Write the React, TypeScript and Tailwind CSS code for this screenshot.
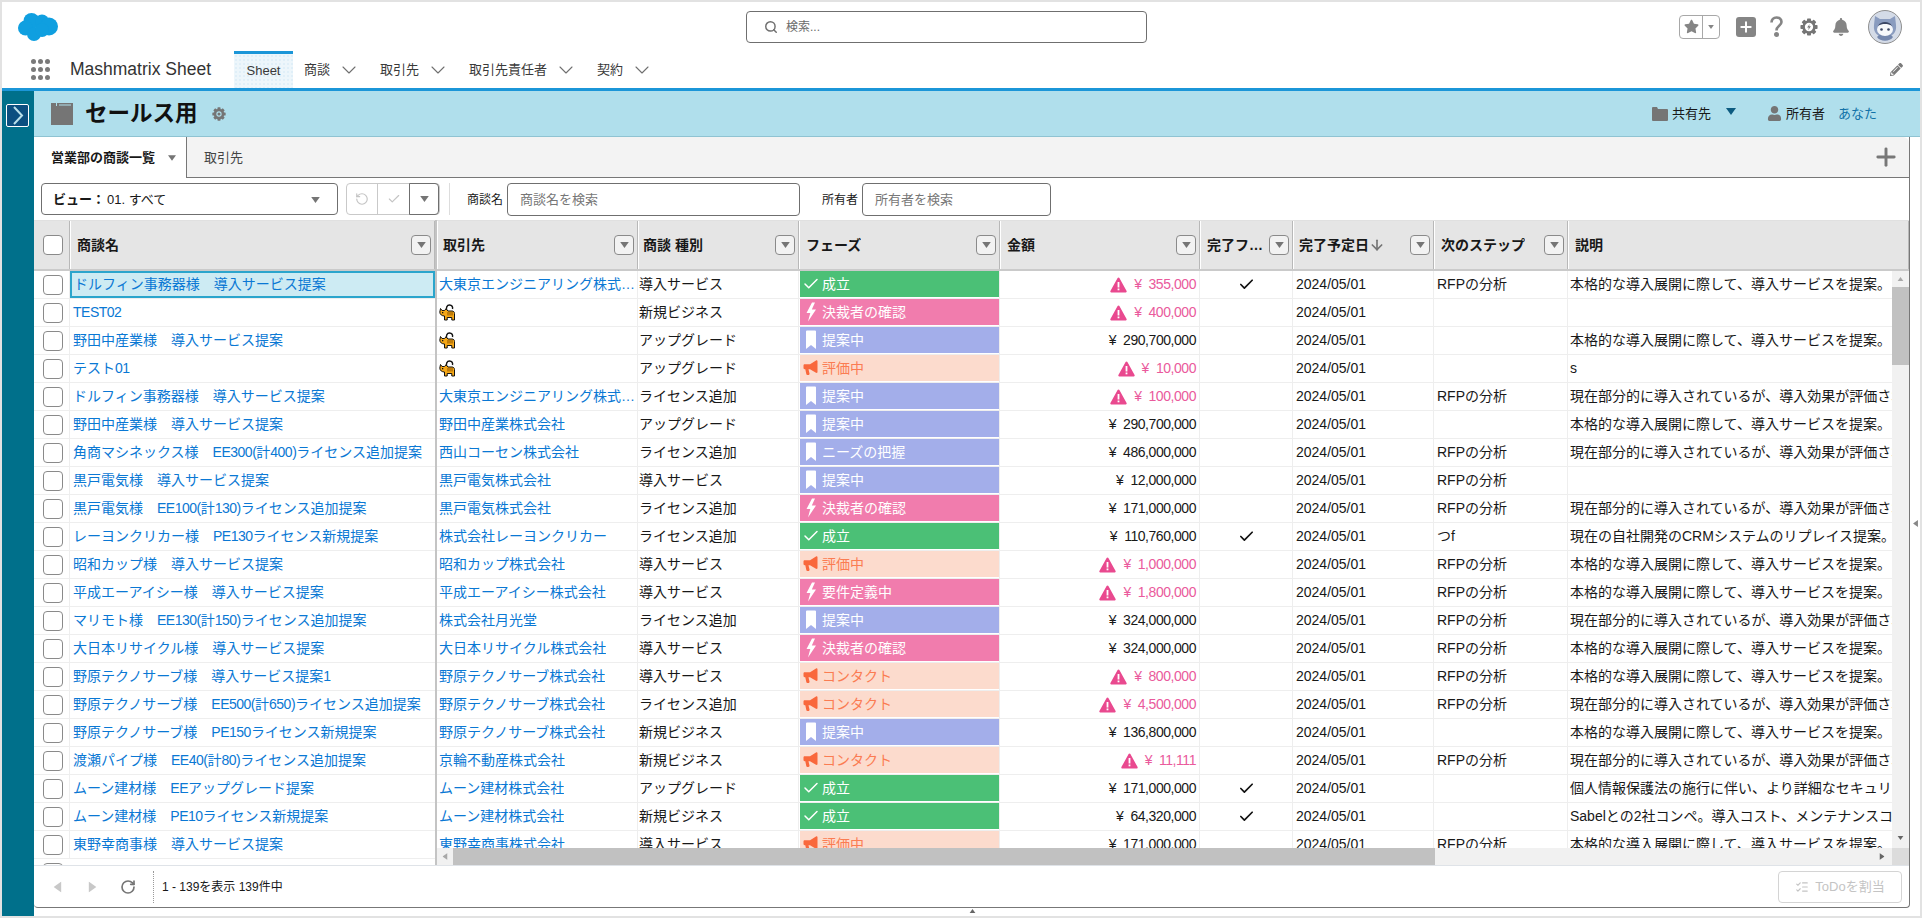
import { ArrowDown, Check, ChevronDown, ListChecks, Plus, RotateCcw, RotateCw, Search } from "lucide-react";
import { FaBell, FaPencilAlt, FaStar, FaUser } from "react-icons/fa";

type Phase = "won" | "decide" | "propose" | "eval" | "needs" | "req" | "contact";

const PHASES: Record<Phase, { label: string; kind: "green" | "pink" | "blue" | "peach" }> = {
  won: { label: "成立", kind: "green" },
  decide: { label: "決裁者の確認", kind: "pink" },
  req: { label: "要件定義中", kind: "pink" },
  propose: { label: "提案中", kind: "blue" },
  needs: { label: "ニーズの把握", kind: "blue" },
  eval: { label: "評価中", kind: "peach" },
  contact: { label: "コンタクト", kind: "peach" },
};

const HONKAKU = "本格的な導入展開に際して、導入サービスを提案。";
const GENZAI = "現在部分的に導入されているが、導入効果が評価されていない。";
const RFP = "RFPの分析";

type Row = {
  name: string;
  account: string | null;
  type: string;
  phase: Phase;
  amount: string;
  warn?: boolean;
  done?: boolean;
  next?: string;
  desc?: string;
};

const ROWS: Row[] = [
  { name: "ドルフィン事務器様　導入サービス提案", account: "大東京エンジニアリング株式会社", type: "導入サービス", phase: "won", amount: "355,000", warn: true, done: true, next: RFP, desc: HONKAKU },
  { name: "TEST02", account: null, type: "新規ビジネス", phase: "decide", amount: "400,000", warn: true },
  { name: "野田中産業様　導入サービス提案", account: null, type: "アップグレード", phase: "propose", amount: "290,700,000", desc: HONKAKU },
  { name: "テスト01", account: null, type: "アップグレード", phase: "eval", amount: "10,000", warn: true, desc: "s" },
  { name: "ドルフィン事務器様　導入サービス提案", account: "大東京エンジニアリング株式会社", type: "ライセンス追加", phase: "propose", amount: "100,000", warn: true, next: RFP, desc: GENZAI },
  { name: "野田中産業様　導入サービス提案", account: "野田中産業株式会社", type: "アップグレード", phase: "propose", amount: "290,700,000", desc: HONKAKU },
  { name: "角商マシネックス様　EE300(計400)ライセンス追加提案", account: "西山コーセン株式会社", type: "ライセンス追加", phase: "needs", amount: "486,000,000", next: RFP, desc: GENZAI },
  { name: "黒戸電気様　導入サービス提案", account: "黒戸電気株式会社", type: "導入サービス", phase: "propose", amount: "12,000,000", next: RFP },
  { name: "黒戸電気様　EE100(計130)ライセンス追加提案", account: "黒戸電気株式会社", type: "ライセンス追加", phase: "decide", amount: "171,000,000", next: RFP, desc: GENZAI },
  { name: "レーヨンクリカー様　PE130ライセンス新規提案", account: "株式会社レーヨンクリカー", type: "ライセンス追加", phase: "won", amount: "110,760,000", done: true, next: "つf", desc: "現在の自社開発のCRMシステムのリプレイス提案。" },
  { name: "昭和カップ様　導入サービス提案", account: "昭和カップ株式会社", type: "導入サービス", phase: "eval", amount: "1,000,000", warn: true, next: RFP, desc: HONKAKU },
  { name: "平成エーアイシー様　導入サービス提案", account: "平成エーアイシー株式会社", type: "導入サービス", phase: "req", amount: "1,800,000", warn: true, next: RFP, desc: HONKAKU },
  { name: "マリモト様　EE130(計150)ライセンス追加提案", account: "株式会社月光堂", type: "ライセンス追加", phase: "propose", amount: "324,000,000", next: RFP, desc: GENZAI },
  { name: "大日本リサイクル様　導入サービス提案", account: "大日本リサイクル株式会社", type: "導入サービス", phase: "decide", amount: "324,000,000", next: RFP, desc: HONKAKU },
  { name: "野原テクノサーブ様　導入サービス提案1", account: "野原テクノサーブ株式会社", type: "導入サービス", phase: "contact", amount: "800,000", warn: true, next: RFP, desc: HONKAKU },
  { name: "野原テクノサーブ様　EE500(計650)ライセンス追加提案", account: "野原テクノサーブ株式会社", type: "ライセンス追加", phase: "contact", amount: "4,500,000", warn: true, next: RFP, desc: GENZAI },
  { name: "野原テクノサーブ様　PE150ライセンス新規提案", account: "野原テクノサーブ株式会社", type: "新規ビジネス", phase: "propose", amount: "136,800,000", desc: HONKAKU },
  { name: "渡瀬パイプ様　EE40(計80)ライセンス追加提案", account: "京輪不動産株式会社", type: "新規ビジネス", phase: "contact", amount: "11,111", warn: true, next: RFP, desc: GENZAI },
  { name: "ムーン建材様　EEアップグレード提案", account: "ムーン建材株式会社", type: "アップグレード", phase: "won", amount: "171,000,000", done: true, desc: "個人情報保護法の施行に伴い、より詳細なセキュリティ対策を提案。" },
  { name: "ムーン建材様　PE10ライセンス新規提案", account: "ムーン建材株式会社", type: "新規ビジネス", phase: "won", amount: "64,320,000", done: true, desc: "Sabelとの2社コンペ。導入コスト、メンテナンスコストを評価。" },
  { name: "東野幸商事様　導入サービス提案", account: "東野幸商事株式会社", type: "導入サービス", phase: "eval", amount: "171,000,000", next: RFP, desc: HONKAKU },
];

function Cloud() {
  return (
    <svg width="40" height="28" viewBox="0 0 40 28" fill="#0f9fe0">
      <circle cx="13.5" cy="8" r="8" />
      <circle cx="24" cy="8.5" r="7" />
      <circle cx="31" cy="13.5" r="9" />
      <circle cx="7.5" cy="15" r="7.5" />
      <circle cx="16" cy="21" r="7" />
      <circle cx="24" cy="17" r="7" />
    </svg>
  );
}

function Gear({ size, bolt }: { size: number; bolt?: boolean }) {
  const teeth = [0, 45, 90, 135];
  return (
    <svg width={size} height={size} viewBox="0 0 20 20">
      <circle cx="10" cy="10" r="7.4" fill="#757575" />
      {teeth.map((t) => (
        <rect key={t} x="7.8" y="0.5" width="4.4" height="19" rx="0.8" fill="#757575" transform={`rotate(${t} 10 10)`} />
      ))}
      <circle cx="10" cy="10" r={bolt ? 4.6 : 3.8} fill={bolt ? "#fff" : "#b0dfec"} />
      {bolt ? <path d="M10.8 6.6 7.9 10.6h1.900l-.7 2.900 3-4.200h-2z" fill="#757575" /> : <circle cx="10" cy="10" r="2.200" fill="#757575" />}
    </svg>
  );
}

function Avatar() {
  return (
    <svg width="34" height="34" viewBox="0 0 34 34">
      <circle cx="17" cy="17" r="16.5" fill="#d4dbe7" stroke="#8f8f8f" />
      <path d="M7 6l5 3h10l5-3 1 9c1 8-4 12-11 12S5 23 6 15z" fill="#8a9cbf" />
      <path d="M9 27c3 5 13 5 16 0l-2-2H11z" fill="#7487ad" />
      <ellipse cx="17" cy="19.500" rx="8" ry="6.500" fill="#f6f8fb" />
      <path d="M10 16c1.500-3 4-4 7-4s5.500 1 7 4c-2-1.500-4.500-2-7-2s-5 .5-7 2z" fill="#3a4664" />
      <circle cx="13.5" cy="19.500" r="1.300" fill="#3a4664" />
      <circle cx="20.500" cy="19.500" r="1.300" fill="#3a4664" />
    </svg>
  );
}

function CatIcon() {
  return (
    <svg width="16" height="17" viewBox="0 0 16 17" className="shrink-0">
      <path d="M8 7C6.500 4 8 1 10.500 1S14 3 13.500 5" fill="none" stroke="#111" strokeWidth="1.400" />
      <path d="M1.500 4.500 3 6.500h2.500L7 4.800 9 7h4c1.500 0 2.500 1 2.500 2.500V16H12.800v-2.500H8.200V16H5.500v-4C3 12 .8 10.500.8 8z" fill="#f5a716" stroke="#111" strokeWidth="1" strokeLinejoin="round" />
      <path d="M9 8v3.500M11 8v3.500M13 8v3.500" stroke="#8a5200" strokeWidth="1" />
      <rect x="3" y="8" width="1.300" height="1.300" fill="#111" />
    </svg>
  );
}

function PhaseIcon({ kind }: { kind: string }) {
  if (kind === "green") return <Check size={18} strokeWidth={2} className="text-white" />;
  if (kind === "pink")
    return (
      <svg width="14" height="20" viewBox="0 0 14 20" fill="#fff">
        <path d="M8 0.500 2.500 11h3.800L4 19.500 12 7.500H7.800L11 0.500z" />
      </svg>
    );
  if (kind === "blue")
    return (
      <svg width="12" height="20" viewBox="0 0 12 20" fill="#fff">
        <path d="M2 0.500h8a1 1 0 0 1 1 1V19l-5-4-5 4V1.500a1 1 0 0 1 1-1z" />
      </svg>
    );
  return (
    <svg width="16" height="20" viewBox="0 0 16 20" fill="#f9683c">
      <path d="M0.500 7.500c0-.7.500-1.200 1.200-1.200H7L13 2.500c.8-.4 1.500 0 1.500.8V14c0 .8-.7 1.200-1.500.8l-6-3.500H5.500l1 4.200c.2.800-.3 1.500-1.200 1.500H4.400c-.6 0-1-.3-1.100-.9l-1-4.800H1.700c-.7 0-1.200-.5-1.200-1.200z" />
    </svg>
  );
}

function WarnIcon() {
  return (
    <svg width="17" height="16" viewBox="0 0 17 16" className="mr-[7px] shrink-0">
      <path d="M8.500 0.500c.4 0 .7.200.9.600l7.200 13c.3.600-.1 1.400-.8 1.400H1.200c-.7 0-1.100-.8-.8-1.400l7.200-13c.2-.4.500-.6.900-.6z" fill="#e9498f" />
      <rect x="7.600" y="5" width="1.800" height="5.500" fill="#fff" />
      <rect x="7.600" y="11.500" width="1.800" height="1.800" fill="#fff" />
    </svg>
  );
}

function Caret({ className }: { className: string }) {
  return (
    <svg width="10" height="7" viewBox="0 0 10 7" className={className}>
      <path d="M0 0h10L5 7z" fill="currentColor" />
    </svg>
  );
}

function FilterBtn() {
  return (
    <button className="ml-auto flex h-[20px] w-[20px] shrink-0 items-center justify-center rounded-[4px] border border-[#8a8a8a] bg-[#f2f2f2] text-[#757575]">
      <Caret className="h-[6px] w-[9px]" />
    </button>
  );
}

function Box() {
  return <span className="block h-[20px] w-[20px] rounded-[4px] border border-[#8a8a8a] bg-white" />;
}

// the latin runs of the names sit tighter than the kana around them
function NameText({ text }: { text: string }) {
  return (
    <>
      {text.split(/([A-Za-z0-9()]+)/).map((part, i) =>
        i % 2 === 1 ? (
          <span key={i} className="tracking-[-0.5px]">
            {part}
          </span>
        ) : (
          part
        ),
      )}
    </>
  );
}

function HeadCell({ label, width, filter = true, arrow, pad }: { label: string; width: string; filter?: boolean; arrow?: boolean; pad: string }) {
  return (
    <div className={`flex h-full shrink-0 items-center border-r border-r-[#b8b8b8] border-l border-l-white pr-[3px] ${width} ${pad}`}>
      <span className="truncate pt-[1px] text-[14px] font-bold text-[#181818]">{label}</span>
      {arrow ? <ArrowDown size={16} strokeWidth={2.5} className="shrink-0 text-[#757575]" /> : null}
      {filter ? <FilterBtn /> : null}
    </div>
  );
}

function Amount({ row }: { row: Row }) {
  const color = row.warn ? "text-[#ea5a9c]" : "text-[#181818]";
  return (
    <div className={`flex h-full w-[200px] shrink-0 items-center justify-end border-r border-[#eeeeee] pr-[3px] tracking-[-0.45px] ${color}`}>
      {row.warn ? <WarnIcon /> : null}
      <span className="mr-[7px]">¥</span>
      <span>{row.amount}</span>
    </div>
  );
}

function PhaseCell({ phase }: { phase: Phase }) {
  const { label, kind } = PHASES[phase];
  const fill = {
    green: "bg-[#4bc076] text-white",
    pink: "bg-[#f17cad] text-white",
    blue: "bg-[#a3aeea] text-white",
    peach: "bg-[#fcdbcd] text-[#fb7c52]",
  }[kind];
  return (
    <div className="h-full w-[201px] shrink-0 border-r border-[#eeeeee] pb-[1px] pl-[1px]">
      <div className={`flex h-full items-center ${fill}`}>
        <div className="flex w-[22px] shrink-0 justify-center">
          <PhaseIcon kind={kind} />
        </div>
        <span>{label}</span>
      </div>
    </div>
  );
}

function RightRow({ row }: { row: Row }) {
  return (
    <div className="flex h-[28px] border-b border-[#eeeeee] text-[14px] text-[#181818]">
      <div className="flex h-full w-[201px] shrink-0 items-center border-r border-[#eeeeee] pl-[2px] pr-[1px] text-[#0a78d4]">
        {row.account ? <span className="truncate">{row.account}</span> : <CatIcon />}
      </div>
      <div className="flex h-full w-[161px] shrink-0 items-center border-r border-[#eeeeee] pl-[1px]">{row.type}</div>
      <PhaseCell phase={row.phase} />
      <Amount row={row} />
      <div className="flex h-full w-[93px] shrink-0 items-center justify-center border-r border-[#eeeeee]">
        {row.done ? <Check size={17} strokeWidth={2.4} className="text-[#111]" /> : null}
      </div>
      <div className="flex h-full w-[141px] shrink-0 items-center border-r border-[#eeeeee] pl-[3px]">2024/05/01</div>
      <div className="flex h-full w-[134px] shrink-0 items-center border-r border-[#eeeeee] pl-[3px]">{row.next}</div>
      <div className="flex h-full w-[324px] shrink-0 items-center overflow-hidden whitespace-nowrap pl-[2px]">{row.desc}</div>
    </div>
  );
}

function Grid() {
  return (
    <div className="flex min-h-0 flex-1">
      {/* frozen columns */}
      <div className="flex w-[403px] shrink-0 flex-col overflow-hidden border-r-2 border-[#c4c4c4]">
        <div className="flex h-[51px] shrink-0 border-t border-[#e0e0e0] border-b-2 border-b-[#cacaca] bg-[#e5e5e5]">
          <div className="flex h-full w-[36px] shrink-0 items-center justify-center border-r border-r-[#b8b8b8] pl-[2px]">
            <Box />
          </div>
          <HeadCell label="商談名" width="w-[365px]" pad="pl-[6px]" />
        </div>
        {ROWS.map((r, i) => (
          <div key={i} className="flex h-[28px] shrink-0 border-b border-[#eeeeee] text-[14px]">
            <div className="flex h-full w-[36px] shrink-0 items-center justify-center border-r border-[#eeeeee] pl-[2px]">
              <Box />
            </div>
            <div className={`flex h-full w-[365px] shrink-0 items-center whitespace-nowrap text-[#0a78d4] ${i === 0 ? "border-2 border-[#2ba5cc] bg-[#cdebf3] pl-[2px]" : "pl-[3px]"}`}>
              <span>
                <NameText text={r.name} />
              </span>
            </div>
          </div>
        ))}
        <div className="flex h-[28px] shrink-0 text-[14px]">
          <div className="flex h-full w-[36px] shrink-0 items-center justify-center pl-[2px]">
            <Box />
          </div>
          <div className="flex h-full items-center whitespace-nowrap pl-[3px] text-[#0a78d4]">大日本リサイクル様　導入サービス提案</div>
        </div>
      </div>

      {/* scrolling columns */}
      <div className="flex min-w-0 flex-1 flex-col">
        <div className="flex h-[51px] shrink-0 border-t border-[#e0e0e0] border-b-2 border-b-[#cacaca] bg-[#e5e5e5]">
          <HeadCell label="取引先" width="w-[201px]" pad="pl-[5px]" />
          <HeadCell label="商談 種別" width="w-[161px]" pad="pl-[4px]" />
          <HeadCell label="フェーズ" width="w-[201px]" pad="pl-[6px]" />
          <HeadCell label="金額" width="w-[200px]" pad="pl-[6px]" />
          <HeadCell label="完了フェーズ" width="w-[93px]" pad="pl-[6px]" />
          <HeadCell label="完了予定日" width="w-[141px]" pad="pl-[5px]" arrow />
          <HeadCell label="次のステップ" width="w-[134px]" pad="pl-[6px]" />
          <HeadCell label="説明" width="flex-1" pad="pl-[6px]" filter={false} />
        </div>
        <div className="flex min-h-0 flex-1">
          <div className="min-w-0 flex-1 overflow-hidden">
            {ROWS.map((r, i) => (
              <RightRow key={i} row={r} />
            ))}
          </div>
          <div className="flex w-[17px] shrink-0 flex-col items-center bg-[#f1f1f1] text-[#a8a8a8]">
            <Caret className="mt-[6px] h-[4px] w-[7px] rotate-180" />
            <div className="mt-[6px] h-[78px] w-full bg-[#c1c1c1]" />
            <div className="flex-1" />
            <Caret className="mb-[8px] h-[4px] w-[7px] text-[#666]" />
          </div>
        </div>
        <div className="flex h-[17px] shrink-0 items-center bg-[#f1f1f1]">
          <div className="flex w-[16px] justify-center text-[#a8a8a8]">
            <Caret className="h-[5px] w-[8px] rotate-90" />
          </div>
          <div className="h-full w-[982px] bg-[#c1c1c1]" />
          <div className="flex-1" />
          <div className="mr-[2px] flex w-[16px] justify-center text-[#666]">
            <Caret className="h-[5px] w-[8px] -rotate-90" />
          </div>
          <div className="h-full w-[17px] bg-[#dcdcdc]" />
        </div>
      </div>
    </div>
  );
}

export default function App() {
  return (
    <div className="flex h-[918px] w-[1922px] flex-col overflow-hidden border-2 border-[#e2e2e2] bg-white font-['Liberation_Sans','Noto_Sans_CJK_JP',sans-serif] text-[#181818]">
      {/* global header */}
      <div className="grid h-[49px] shrink-0 grid-cols-[744px_401px_1fr] items-center">
        <div className="pl-[16px]">
          <Cloud />
        </div>
        <div className="flex h-[32px] items-center rounded-[4px] border border-[#6f6f6f] pl-[17px] text-[12px] text-[#6b6b6b]">
          <Search size={14} strokeWidth={2.5} className="mr-[8px] text-[#6f6f6f]" />
          検索...
        </div>
        <div className="flex items-center justify-end pr-[18px] text-[#858585]">
          <div className="flex h-[24px] w-[41px] items-center rounded-[4px] border border-[#a8a8a8]">
            <div className="flex h-full w-[23px] items-center justify-center border-r border-[#a8a8a8]">
              <FaStar size={15} />
            </div>
            <Caret className="ml-[4px] h-[4px] w-[8px]" />
          </div>
          <div className="ml-[16px] flex h-[20px] w-[20px] items-center justify-center rounded-[3px] bg-[#858585] text-white">
            <Plus size={16} strokeWidth={3} />
          </div>
          <svg width="13" height="21" viewBox="0 0 13 21" className="ml-[14px]" fill="none" stroke="#858585" strokeWidth="2.6">
            <path d="M1.500 6.500C1.500 3.500 3.500 1.500 6.500 1.500s5 2 5 4.500c0 3.800-5 4-5 8.500" />
            <circle cx="6.500" cy="18.500" r="1.200" fill="#858585" />
          </svg>
          <div className="ml-[17px]">
            <Gear size={18} bolt />
          </div>
          <div className="ml-[14px]">
            <FaBell size={18} />
          </div>
          <div className="ml-[18px]">
            <Avatar />
          </div>
        </div>
      </div>

      {/* app nav */}
      <div className="flex h-[37px] shrink-0 items-center text-[13px] text-[#3a3a3a]">
        <div className="ml-[29px] grid h-[21px] w-[21px] shrink-0 grid-cols-3 content-between justify-between">
          {[0, 1, 2, 3, 4, 5, 6, 7, 8].map((d) => (
            <span key={d} className="h-[5px] w-[5px] rounded-full bg-[#7a7a7a]" />
          ))}
        </div>
        <div className="ml-[18px] w-[164px] shrink-0 text-[17.5px] text-[#333]">Mashmatrix Sheet</div>
        <div className="flex h-full w-[59px] shrink-0 items-center justify-center border-t-[3px] border-[#1b96d8] bg-[#edf6fb] bg-[radial-gradient(#e0eff8_1px,transparent_1px)] bg-[length:4px_4px]">Sheet</div>
        {["商談", "取引先", "取引先責任者", "契約"].map((n) => (
          <div key={n} className="ml-[11px] mr-[8px] flex items-center">
            <span>{n}</span>
            <ChevronDown size={24} strokeWidth={1.1} className="ml-[7px] text-[#6f6f6f]" />
          </div>
        ))}
        <FaPencilAlt size={13} className="ml-auto mr-[17px] text-[#7a7a7a]" />
      </div>

      <div className="h-[3px] shrink-0 bg-[#1b96d8]" />

      <div className="flex min-h-0 flex-1">
        {/* sidebar */}
        <div className="w-[32px] shrink-0 bg-[#00708b] pl-[4px] pt-[13px]">
          <div className="flex h-[23px] w-[23px] items-center justify-center rounded-[2px] border border-white bg-[#0b4f80]">
            <svg width="12" height="19" viewBox="0 0 12 19" fill="none" stroke="#b8dfe9" strokeWidth="2">
              <path d="M2 1l8 8.500L2 18" />
            </svg>
          </div>
        </div>

        <div className="flex min-w-0 flex-1 flex-col">
          {/* sheet title */}
          <div className="flex h-[46px] shrink-0 items-center border-b border-[#8fc3d2] bg-[#b0dfec] pl-[17px] pr-[43px]">
            <svg width="22" height="22" viewBox="0 0 22 22" fill="#757575" className="shrink-0">
              <path d="M0 0h5v3h1V0h16v22H0z" />
              <rect x="8" y="1.500" width="12" height="1" fill="#b0dfec" />
            </svg>
            <h1 className="ml-[12px] pt-[2px] text-[22.5px] font-bold leading-none text-[#111]">セールス用</h1>
            <div className="ml-[14px]">
              <Gear size={14} />
            </div>
            <svg width="16" height="14" viewBox="0 0 16 14" fill="#757575" className="ml-auto shrink-0">
              <path d="M0 1a1 1 0 0 1 1-1h4l1 2h9a1 1 0 0 1 1 1v10a1 1 0 0 1-1 1H1a1 1 0 0 1-1-1z" />
            </svg>
            <span className="ml-[4px] pt-[1px] text-[13px]">共有先</span>
            <Caret className="ml-[15px] mb-[5px] text-[#0c5b80]" />
            <FaUser size={15} className="ml-[31px] text-[#757575]" />
            <span className="ml-[4px] pt-[1px] text-[13px]">所有者</span>
            <span className="ml-[13px] pt-[1px] text-[13px] text-[#1172a8]">あなた</span>
          </div>

          <div className="flex min-h-0 flex-1">
            <div className="flex min-w-0 flex-1 flex-col">
              {/* panel */}
              <div className="flex min-h-0 flex-1 flex-col overflow-hidden rounded-b-[4px] border-r border-b border-[#777]">
                <div className="flex h-[41px] shrink-0 items-stretch rounded-tr-[6px] border-b border-[#777] bg-[#f3f3f3] text-[13px]">
                  <div className="-mb-px flex w-[153px] items-center border-r border-[#777] bg-white pl-[17px] pt-[1px] font-bold">
                    営業部の商談一覧
                    <Caret className="ml-[13px] h-[6px] w-[8px] text-[#757575]" />
                  </div>
                  <div className="flex items-center pl-[17px] pt-[1px] text-[#444]">取引先</div>
                  <Plus size={28} strokeWidth={2.5} className="ml-auto mr-[9px] self-center text-[#777]" />
                </div>

                <div className="flex h-[42px] shrink-0 items-center pl-[7px] text-[12px]">
                  <div className="flex h-[32px] w-[297px] items-center rounded-[4px] border border-[#6f6f6f] pl-[11px] pt-[1px] text-[13px]">
                    <b>ビュー：</b>
                    <span className="ml-[2px]">01. すべて</span>
                    <Caret className="ml-auto mr-[17px] h-[6px] w-[9px] text-[#757575]" />
                  </div>
                  <div className="ml-[8px] flex h-[32px] w-[94px] rounded-[4px] border border-[#c9c9c9]">
                    <div className="flex w-[31px] items-center justify-center border-r border-[#c9c9c9] text-[#c4c4c4]">
                      <RotateCcw size={14} />
                    </div>
                    <div className="flex w-[31px] items-center justify-center text-[#c4c4c4]">
                      <Check size={14} />
                    </div>
                    <div className="-my-px flex flex-1 items-center justify-center rounded-r-[4px] border border-[#6f6f6f] text-[#757575]">
                      <Caret className="h-[6px] w-[9px]" />
                    </div>
                  </div>
                  <div className="ml-[9px] h-[32px] w-px bg-[#dddddd]" />
                  <span className="ml-[17px] pt-[1px]">商談名</span>
                  <div className="ml-[4px] flex h-[33px] w-[293px] items-center rounded-[4px] border border-[#6f6f6f] pl-[12px] pt-[1px] text-[13px] text-[#777]">商談名を検索</div>
                  <span className="ml-[22px] pt-[1px]">所有者</span>
                  <div className="ml-[4px] flex h-[33px] w-[189px] items-center rounded-[4px] border border-[#6f6f6f] pl-[12px] pt-[1px] text-[13px] text-[#777]">所有者を検索</div>
                </div>

                <Grid />

                {/* footer */}
                <div className="flex h-[42px] shrink-0 items-center border-t border-[#dfe3e8] text-[12px]">
                  <Caret className="ml-[18px] h-[8px] w-[11px] rotate-90 text-[#c8c8c8]" />
                  <Caret className="ml-[24px] h-[8px] w-[11px] -rotate-90 text-[#c8c8c8]" />
                  <RotateCw size={16} strokeWidth={2.5} className="ml-[22px] text-[#757575]" />
                  <div className="ml-[17px] h-[32px] border-l border-dotted border-[#999]" />
                  <span className="ml-[8px]">1 - 139を表示 139件中</span>
                  <div className="ml-auto mr-[7px] flex h-[32px] w-[124px] items-center justify-center rounded-[4px] border border-[#d4d4d4] text-[13px] text-[#c4c4c4]">
                    <ListChecks size={14} className="mr-[6px]" />
                    ToDoを割当
                  </div>
                </div>
              </div>
              <div className="flex h-[8px] shrink-0 justify-center text-[#666]">
                <Caret className="mt-[1px] h-[4px] w-[7px] rotate-180" />
              </div>
            </div>
            {/* right edge strip */}
            <div className="flex w-[10px] shrink-0 items-center justify-center text-[#888]">
              <Caret className="mb-[6px] h-[5px] w-[7px] rotate-90" />
            </div>
          </div>
        </div>
      </div>
    </div>
  );
}
